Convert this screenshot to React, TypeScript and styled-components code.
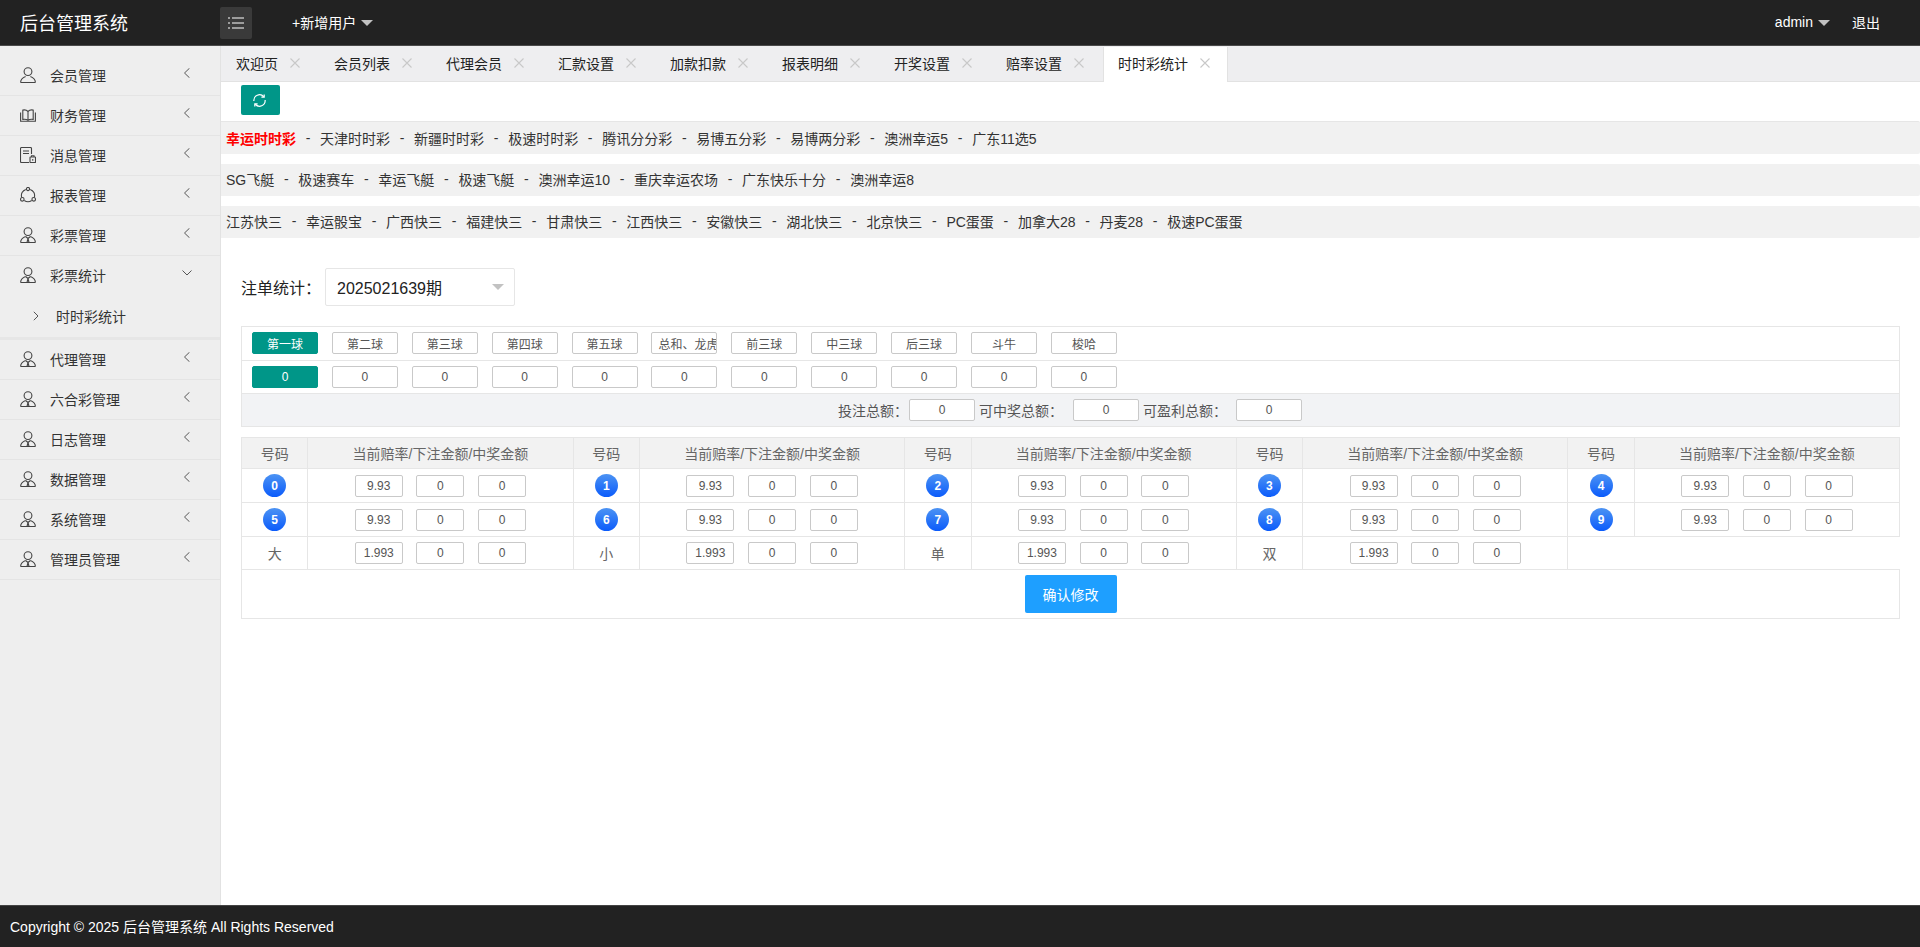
import React from 'react';
import styled, { createGlobalStyle } from 'styled-components';

const GlobalStyle = createGlobalStyle`
  html, body, #root { height: 100%; }
  body {
    margin: 0;
    font-family: "Liberation Sans", "Noto Sans CJK SC", sans-serif;
    font-size: 14px;
    color: #333;
    background: #fff;
  }
  * { box-sizing: border-box; }
`;

const Page = styled.div`
  height: 100vh;
  display: flex;
  flex-direction: column;
  overflow: hidden;
`;

const Header = styled.header`
  height: 46px;
  flex: none;
  display: flex;
  align-items: center;
  background: #222;
  border-bottom: 1px solid #4a4a4a;
  color: #fff;
  padding-bottom: 1px;
`;

const Logo = styled.div`
  width: 220px;
  padding-left: 20px;
  font-size: 18px;
`;

const MenuToggle = styled.button`
  width: 32px;
  height: 32px;
  margin-top: 2px;
  padding: 0;
  border: none;
  border-radius: 2px;
  background: #3a3a3a;
  display: flex;
  align-items: center;
  justify-content: center;
`;

const HeaderLink = styled.div<{ $left?: number }>`
  display: flex;
  align-items: center;
  color: #fff;
  font-size: 14px;
  margin-left: ${(p) => p.$left || 0}px;
`;

const Caret = styled.span`
  margin-left: 5px;
  margin-top: 1px;
  border-style: solid;
  border-width: 6px 6px 0;
  border-color: #c2c2c2 transparent transparent;
`;

const HeaderRight = styled.div`
  margin-left: auto;
  display: flex;
  align-items: center;
  padding-right: 40px;
`;

const Body = styled.div`
  flex: 1;
  display: flex;
  min-height: 0;
`;

const Sidebar = styled.aside`
  width: 221px;
  flex: none;
  background: #eee;
  border-right: 1px solid #e2e2e2;
  padding-top: 10px;
`;

const NavItem = styled.div<{ $open?: boolean }>`
  height: 40px;
  display: flex;
  align-items: center;
  padding: 0 28px 2px 20px;
  border-bottom: ${(p) => (p.$open ? '1px solid transparent' : '1px solid #e4e4e4')};
  color: #333;
`;

const NavIcon = styled.svg`
  width: 16px;
  height: 16px;
  flex: none;
  margin-right: 14px;
  fill: none;
  stroke: #444;
  stroke-width: 1.1;
`;

const NavLabel = styled.span`
  flex: 1;
`;

const NavArrow = styled.svg`
  width: 10px;
  height: 10px;
  margin-top: -4px;
  fill: none;
  stroke: #555;
  stroke-width: 1;
`;

const SubMenu = styled.div`
  height: 44px;
  padding: 0 0 1px 33px;
  display: flex;
  align-items: center;
  border-bottom: 3px solid #e6e6e6;
`;

const SubArrow = styled.svg`
  width: 6px;
  height: 10px;
  margin-right: 17px;
  fill: none;
  stroke: #555;
  stroke-width: 1;
`;

const Main = styled.main`
  flex: 1;
  min-width: 0;
  background: #fff;
`;

const TabBar = styled.div`
  height: 36px;
  display: flex;
  background: #eeeef0;
  border-bottom: 1px solid #e2e2e2;
`;

const Tab = styled.div<{ $active?: boolean }>`
  height: 35px;
  margin-top: ${(p) => (p.$active ? '1px' : '0')};
  margin-right: 2px;
  padding: 0 ${(p) => (p.$active ? '17px' : '16px')} ${(p) => (p.$active ? '3px' : '1px')} 14px;
  display: flex;
  align-items: center;
  color: #222;
  background: ${(p) => (p.$active ? '#fff' : 'transparent')};
  border-left: 1px solid ${(p) => (p.$active ? '#e2e2e2' : 'transparent')};
  border-right: 1px solid ${(p) => (p.$active ? '#e2e2e2' : 'transparent')};
  svg {
    margin-left: 12px;
    width: 10px;
    height: 10px;
    stroke: #c8c8c8;
    stroke-width: 1.1;
  }
`;

const Toolbar = styled.div`
  height: 39px;
  padding: 3px 0 0 20px;
`;

const RefreshButton = styled.button`
  width: 39px;
  height: 30px;
  padding: 0 2px 0 0;
  border: none;
  border-radius: 2px;
  background: #009688;
  display: flex;
  align-items: center;
  justify-content: center;
`;

const GameRow = styled.div<{ $first?: boolean }>`
  height: ${(p) => (p.$first ? '33px' : '32px')};
  display: flex;
  align-items: center;
  margin-bottom: 10px;
  padding: 0 0 ${(p) => (p.$first ? '0' : '2px')} 5px;
  background: #f1f1f1;
  border-top: ${(p) => (p.$first ? '1px solid #e6e6e6' : 'none')};
  border-radius: 0 2px 2px 0;
`;

const GameName = styled.span<{ $active?: boolean }>`
  color: ${(p) => (p.$active ? '#f00' : '#333')};
  font-weight: ${(p) => (p.$active ? 'bold' : 'normal')};
`;

const GameSep = styled.span`
  padding: 0 9.7px;
`;

const Content = styled.div`
  padding: 20px 20px 0;
`;

const PeriodRow = styled.div`
  display: flex;
  align-items: center;
  margin-bottom: 20px;
  font-size: 16px;
  color: #222;
`;

const PeriodSelect = styled.div`
  width: 190px;
  height: 38px;
  margin-left: 4px;
  padding: 0 10px 0 11px;
  display: flex;
  align-items: center;
  justify-content: space-between;
  border: 1px solid #e6e6e6;
  border-radius: 2px;
  background: #fff;
  span:last-child {
    border-style: solid;
    border-width: 6px 6px 0;
    border-color: #c2c2c2 transparent transparent;
  }
`;

const BallPanel = styled.div`
  border: 1px solid #e6e6e6;
  margin-bottom: 10px;
`;

const BallRow = styled.div`
  height: 33.5px;
  display: flex;
  align-items: center;
  gap: 13.9px;
  padding: 0 0 0 10px;
  border-bottom: 1px solid #e6e6e6;
`;

const BallButton = styled.button<{ $active?: boolean }>`
  width: 66px;
  height: 22px;
  padding: 0 6px;
  flex: none;
  overflow: hidden;
  white-space: nowrap;
  font-family: inherit;
  font-size: 12px;
  color: ${(p) => (p.$active ? '#fff' : '#555')};
  background: ${(p) => (p.$active ? '#009688' : '#fff')};
  border: 1px solid ${(p) => (p.$active ? '#009688' : '#c9c9c9')};
  border-radius: 2px;
`;

const TotalRow = styled.div`
  height: 32px;
  display: flex;
  align-items: center;
  justify-content: center;
  padding-right: 1px;
  background: #f2f3f5;
  color: #555;
`;

const TotalLabel = styled.span<{ $width: number }>`
  width: ${(p) => p.$width}px;
  flex: none;
`;

const TotalValue = styled.div`
  width: 66px;
  height: 22px;
  margin-right: 4px;
  display: flex;
  align-items: center;
  justify-content: center;
  font-size: 12px;
  color: #555;
  background: #fff;
  border: 1px solid #c9c9c9;
  border-radius: 2px;
  &:last-child {
    margin-right: 0;
  }
`;

const OddsTable = styled.table`
  width: 100%;
  table-layout: fixed;
  border-collapse: collapse;
  color: #666;
`;

const HeadCell = styled.th`
  height: 31px;
  padding: 0;
  font-weight: normal;
  background: #f2f2f2;
  border: 1px solid #e6e6e6;
`;

const Cell = styled.td<{ $short?: boolean }>`
  height: ${(p) => (p.$short ? '33px' : '34px')};
  padding: 0;
  text-align: center;
  border: 1px solid #e6e6e6;
`;

const SubmitCell = styled.td`
  height: 49px;
  padding: 0;
  text-align: center;
  border: 1px solid #e6e6e6;
`;

const Ball = styled.span`
  width: 23px;
  height: 23px;
  display: inline-flex;
  align-items: center;
  justify-content: center;
  vertical-align: middle;
  border-radius: 50%;
  font-size: 12px;
  font-weight: bold;
  color: #fff;
  background: linear-gradient(#4c93f3, #0b5bfb);
`;

const OddsInputs = styled.div`
  display: flex;
  justify-content: center;
  gap: 13.7px;
`;

const OddsInput = styled.div`
  width: 48px;
  height: 22px;
  display: flex;
  align-items: center;
  justify-content: center;
  font-size: 12px;
  color: #555;
  background: #fff;
  border: 1px solid #c9c9c9;
  border-radius: 2px;
`;

const SubmitButton = styled.button`
  width: 92px;
  height: 38px;
  padding: 0;
  vertical-align: middle;
  font-family: inherit;
  font-size: 14px;
  color: #fff;
  background: #1e9fff;
  border: none;
  border-radius: 2px;
`;

const Footer = styled.footer`
  height: 42px;
  flex: none;
  display: flex;
  align-items: center;
  padding: 0 0 1px 10px;
  color: #fff;
  background: #222;
  border-top: 1px solid #444;
`;

const PersonIcon = () => (
  <NavIcon viewBox="0 0 16 16">
    <circle cx="8" cy="4.6" r="3.9" />
    <path d="M.6 15.500c0-3.400 2.400-5 5-6M15.400 15.500c0-3.400-2.400-5-5-6M.6 15.500h14.800" />
  </NavIcon>
);

const BookIcon = () => (
  <NavIcon viewBox="0 0 16 16">
    <path d="M8 4.500C6.600 3 4.200 2.800 2.800 3.100v9.300c1.800-.4 3.800-.1 5.200 1 1.400-1.100 3.400-1.400 5.200-1V3.100C11.800 2.800 9.400 3 8 4.500zM8 4.500v9" />
    <path d="M.6 5.500v8.800h14.800V5.500" />
  </NavIcon>
);

const DocIcon = () => (
  <NavIcon viewBox="0 0 16 16">
    <path d="M11.500 7V1.500a1 1 0 0 0-1-1H1.500a1 1 0 0 0-1 1v13a1 1 0 0 0 1 1H9" />
    <path d="M3 4h6M3 6.500h6" />
    <rect x="10" y="10" width="5.500" height="5.500" rx=".5" />
    <path d="M12.750 12v1.800M11.500 10V8.800h2.500V10" />
  </NavIcon>
);

const ChartIcon = () => (
  <NavIcon viewBox="0 0 16 16">
    <path d="M5.800 2.400A6.500 6.500 0 0 0 1.700 10.500M10.200 2.400a6.500 6.500 0 0 1 4.100 8.100M4.300 13.500a6.500 6.500 0 0 0 7.400 0" />
    <circle cx="8" cy="2" r="1.600" />
    <circle cx="2.300" cy="12.300" r="1.800" />
    <circle cx="13.700" cy="12.300" r="1.800" />
  </NavIcon>
);

const TieIcon = () => (
  <NavIcon viewBox="0 0 16 16">
    <circle cx="8" cy="4.600" r="3.900" />
    <path d="M.6 15.500c0-3.400 2.400-5 5-6M15.400 15.500c0-3.400-2.400-5-5-6M.6 15.500h14.800" />
    <path d="M5.600 9.500 8 11.500l2.400-2M8 11.500l-1 4M8 11.500l1 4" />
  </NavIcon>
);

const ChevronLeft = () => (
  <NavArrow viewBox="0 0 10 10">
    <path d="M7.500.2 2.500 5l5 4.800" />
  </NavArrow>
);

const ChevronDown = () => (
  <NavArrow viewBox="0 0 10 10">
    <path d="M.5 2.500 5 7l4.500-4.500" />
  </NavArrow>
);

const CloseIcon = () => (
  <svg viewBox="0 0 10 10">
    <path d="M.5.5l9 9M9.500.5l-9 9" />
  </svg>
);

const topNav = [
  { label: '会员管理', icon: <PersonIcon /> },
  { label: '财务管理', icon: <BookIcon /> },
  { label: '消息管理', icon: <DocIcon /> },
  { label: '报表管理', icon: <ChartIcon /> },
  { label: '彩票管理', icon: <TieIcon /> },
];

const bottomNav = ['代理管理', '六合彩管理', '日志管理', '数据管理', '系统管理', '管理员管理'];

const tabs = ['欢迎页', '会员列表', '代理会员', '汇款设置', '加款扣款', '报表明细', '开奖设置', '赔率设置', '时时彩统计'];

const gameRows = [
  ['幸运时时彩', '天津时时彩', '新疆时时彩', '极速时时彩', '腾讯分分彩', '易博五分彩', '易博两分彩', '澳洲幸运5', '广东11选5'],
  ['SG飞艇', '极速赛车', '幸运飞艇', '极速飞艇', '澳洲幸运10', '重庆幸运农场', '广东快乐十分', '澳洲幸运8'],
  ['江苏快三', '幸运骰宝', '广西快三', '福建快三', '甘肃快三', '江西快三', '安徽快三', '湖北快三', '北京快三', 'PC蛋蛋', '加拿大28', '丹麦28', '极速PC蛋蛋'],
];

const ballTabs = ['第一球', '第二球', '第三球', '第四球', '第五球', '总和、龙虎', '前三球', '中三球', '后三球', '斗牛', '梭哈'];

const Odds: React.FC<{ rate: string }> = ({ rate }) => (
  <OddsInputs>
    <OddsInput>{rate}</OddsInput>
    <OddsInput>0</OddsInput>
    <OddsInput>0</OddsInput>
  </OddsInputs>
);

const App: React.FC = () => (
  <Page>
    <GlobalStyle />
    <Header>
      <Logo>后台管理系统</Logo>
      <MenuToggle type="button" aria-label="menu">
        <svg width="16" height="12" viewBox="0 0 16 12" fill="none" stroke="#fff" strokeWidth="1">
          <path d="M0 1h2M4 1h12M0 6h2M4 6h12M0 11h2M4 11h12" />
        </svg>
      </MenuToggle>
      <HeaderLink $left={40}>
        +新增用户
        <Caret />
      </HeaderLink>
      <HeaderRight>
        <HeaderLink>
          admin
          <Caret />
        </HeaderLink>
        <HeaderLink $left={22}>退出</HeaderLink>
      </HeaderRight>
    </Header>
    <Body>
      <Sidebar>
        {topNav.map((item) => (
          <NavItem key={item.label}>
            {item.icon}
            <NavLabel>{item.label}</NavLabel>
            <ChevronLeft />
          </NavItem>
        ))}
        <NavItem $open>
          <TieIcon />
          <NavLabel>彩票统计</NavLabel>
          <ChevronDown />
        </NavItem>
        <SubMenu>
          <SubArrow viewBox="0 0 6 10">
            <path d="M.8.8 5 5 .8 9.200" />
          </SubArrow>
          时时彩统计
        </SubMenu>
        {bottomNav.map((label) => (
          <NavItem key={label}>
            <TieIcon />
            <NavLabel>{label}</NavLabel>
            <ChevronLeft />
          </NavItem>
        ))}
      </Sidebar>
      <Main>
        <TabBar>
          {tabs.map((tab, i) => (
            <Tab key={tab} $active={i === tabs.length - 1}>
              {tab}
              <CloseIcon />
            </Tab>
          ))}
        </TabBar>
        <Toolbar>
          <RefreshButton type="button" aria-label="refresh">
            <svg width="15" height="15" viewBox="0 0 16 16" fill="none" stroke="#fff" strokeWidth="1.300">
              <path d="M2 8.500A6 6 0 0 1 12.500 4M14 7.500A6 6 0 0 1 3.500 12" />
              <path d="M13 1.500V4.500H10M3 14.500V11.500H6" />
            </svg>
          </RefreshButton>
        </Toolbar>
        {gameRows.map((row, r) => (
          <GameRow key={row[0]} $first={r === 0}>
            {row.map((name, i) => (
              <React.Fragment key={name}>
                {i > 0 && <GameSep>-</GameSep>}
                <GameName $active={r === 0 && i === 0}>{name}</GameName>
              </React.Fragment>
            ))}
          </GameRow>
        ))}
        <Content>
          <PeriodRow>
            注单统计：
            <PeriodSelect>
              <span>2025021639期</span>
              <span />
            </PeriodSelect>
          </PeriodRow>
          <BallPanel>
            <BallRow>
              {ballTabs.map((tab, i) => (
                <BallButton key={tab} type="button" $active={i === 0}>
                  {tab}
                </BallButton>
              ))}
            </BallRow>
            <BallRow>
              {ballTabs.map((tab, i) => (
                <BallButton key={tab} type="button" $active={i === 0}>
                  0
                </BallButton>
              ))}
            </BallRow>
            <TotalRow>
              <TotalLabel $width={71}>投注总额：</TotalLabel>
              <TotalValue>0</TotalValue>
              <TotalLabel $width={94}>可中奖总额：</TotalLabel>
              <TotalValue>0</TotalValue>
              <TotalLabel $width={93}>可盈利总额：</TotalLabel>
              <TotalValue>0</TotalValue>
            </TotalRow>
          </BallPanel>
          <OddsTable>
            <colgroup>
              {[0, 1, 2, 3, 4].map((i) => (
                <React.Fragment key={i}>
                  <col width="4%" />
                  <col width="16%" />
                </React.Fragment>
              ))}
            </colgroup>
            <thead>
              <tr>
                {[0, 1, 2, 3, 4].map((i) => (
                  <React.Fragment key={i}>
                    <HeadCell>号码</HeadCell>
                    <HeadCell>当前赔率/下注金额/中奖金额</HeadCell>
                  </React.Fragment>
                ))}
              </tr>
            </thead>
            <tbody>
              {[0, 5].map((start) => (
                <tr key={start}>
                  {[0, 1, 2, 3, 4].map((i) => (
                    <React.Fragment key={i}>
                      <Cell>
                        <Ball>{start + i}</Ball>
                      </Cell>
                      <Cell>
                        <Odds rate="9.93" />
                      </Cell>
                    </React.Fragment>
                  ))}
                </tr>
              ))}
              <tr>
                {['大', '小', '单', '双'].map((label) => (
                  <React.Fragment key={label}>
                    <Cell $short>{label}</Cell>
                    <Cell $short>
                      <Odds rate="1.993" />
                    </Cell>
                  </React.Fragment>
                ))}
              </tr>
              <tr>
                <SubmitCell colSpan={10}>
                  <SubmitButton type="button">确认修改</SubmitButton>
                </SubmitCell>
              </tr>
            </tbody>
          </OddsTable>
        </Content>
      </Main>
    </Body>
    <Footer>Copyright © 2025 后台管理系统 All Rights Reserved</Footer>
  </Page>
);

export default App;
